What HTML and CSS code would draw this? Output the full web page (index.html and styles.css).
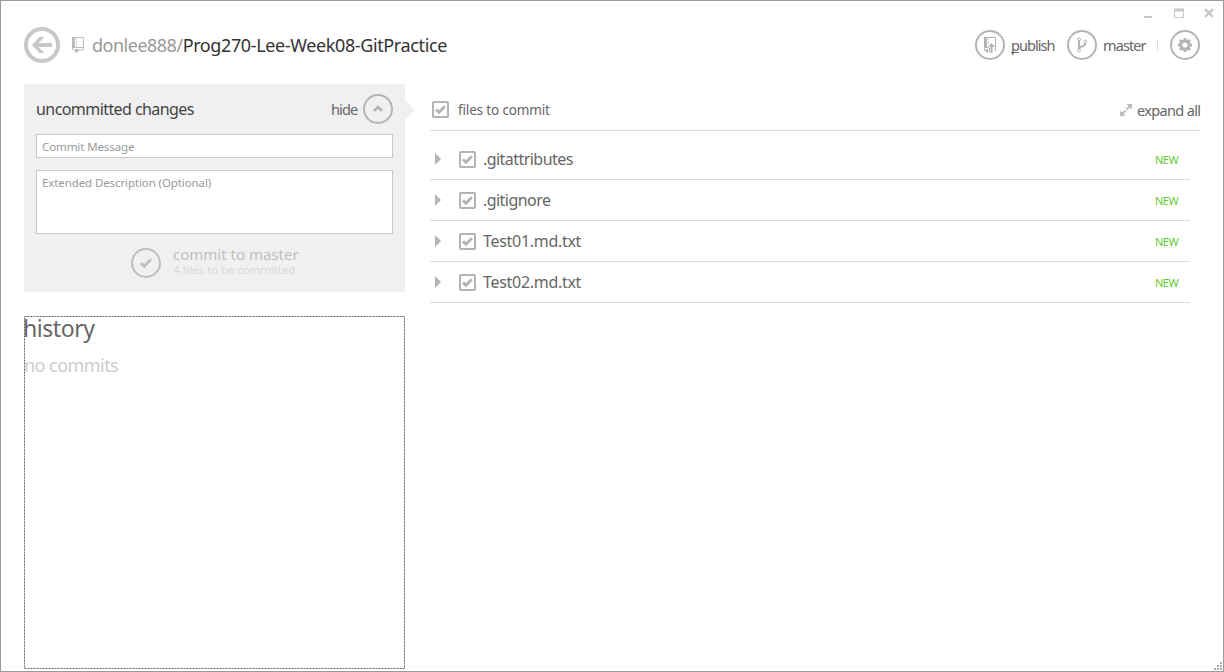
FILE: index.html
```html
<!DOCTYPE html>
<html lang="en">
<head>
<meta charset="utf-8">
<title>Prog270-Lee-Week08-GitPractice</title>
<link rel="stylesheet" href="styles.css">
</head>
<body>
<svg width="0" height="0" class="defs">
  <symbol id="check" viewBox="0 0 17 17"><rect x="1" y="1" width="15" height="15" rx=".8" fill="#fff" stroke="#b4b4b4" stroke-width="2"/><path d="M4 8.400 7 11.200 12.800 5.200" fill="none" stroke="#b4b4b4" stroke-width="2.900"/></symbol>
  <symbol id="ring" viewBox="0 0 30 30"><circle cx="15" cy="15" r="14" fill="none" stroke="#b4b4b4" stroke-width="2"/></symbol>
</svg>
<div class="window">
  <div class="controls">
    <svg width="72" height="12" viewBox="0 0 72 12"><path d="M1 9h8" stroke="#c8c8c8" stroke-width="2"/><path d="M31.5 1.5h9v8h-9z" fill="none" stroke="#c8c8c8"/><path d="M31 2h10" stroke="#c8c8c8" stroke-width="3"/><path d="M62 1l8 8M70 1l-8 8" stroke="#c8c8c8" stroke-width="2.400"/></svg>
  </div>
  <header class="header">
    <svg class="back" width="36" height="36" viewBox="0 0 36 36"><circle cx="18" cy="18" r="16" fill="none" stroke="#c8c8c8" stroke-width="4"/><path d="M8 18 15.500 10H20.500L14.500 16H28V20H14.500L20.500 26H15.500Z" fill="#c8c8c8"/></svg>
    <svg class="repo" width="12" height="16" viewBox="0 0 12 16"><path d="M1 .5h10.500v12.500H6M3 13H1.500L.5 12V.5M.5 10.500h11" fill="none" stroke="#bcbcbc"/><path d="M0 0h3v11H0z" fill="#bcbcbc"/><path d="M4.500 2v7" stroke="#bcbcbc" stroke-dasharray="1 1"/><path d="M3 12h3v4l-1.500-1.500L3 16z" fill="#bcbcbc"/></svg>
    <h1 class="title"><span class="owner">donlee888/</span><span class="name">Prog270-Lee-Week08-GitPractice</span></h1>
    <div class="actions">
      <svg width="30" height="30" viewBox="0 0 30 30"><use href="#ring"/><path d="M9.500 7.500h11v13h-1M9.500 17.500h4M9.500 7.500v13h2" fill="none" stroke="#b4b4b4"/><path d="M9 7h3v10H9z" fill="#b4b4b4"/><path d="M13.500 9v5" stroke="#b4b4b4" stroke-dasharray="1 1"/><path d="M11 19h2v4l-1-1-1 1z" fill="#b4b4b4"/><path d="M14.500 18v4.500" stroke="#b4b4b4"/><path d="M15.500 16h2v7h-2z" fill="#b4b4b4"/><path d="M13 17l3.500-4 3.500 4z" fill="#b4b4b4"/></svg>
      <span class="label publish"><u>p</u>ublish</span>
      <svg width="30" height="30" viewBox="0 0 30 30"><use href="#ring"/><g fill="#fff" stroke="#b4b4b4"><path d="M12 10v10M18 13v2l-6 3" fill="none" stroke-width="2"/><circle cx="12" cy="9.500" r="1.500"/><circle cx="12" cy="20.500" r="1.500"/><circle cx="18.200" cy="11.500" r="1.500"/></g></svg>
      <span class="label master">master</span>
      <span class="divider"></span>
      <svg width="30" height="30" viewBox="0 0 30 30"><use href="#ring"/><g stroke="#b4b4b4" fill="none"><circle cx="15" cy="15" r="4.100" stroke-width="3"/><path d="M15 8v3M15 19v3M8 15h3M19 15h3M10.050 10.050l2.100 2.100M17.850 17.850l2.100 2.100M10.050 19.950l2.100-2.100M17.850 12.150l2.100-2.100" stroke-width="2.800"/></g></svg>
    </div>
  </header>
  <main class="main">
    <aside class="side">
      <section class="commit">
        <div class="commit-head">
          <h2 class="heading">uncommitted changes</h2>
          <span class="hide">hide</span>
          <svg width="30" height="30" viewBox="0 0 30 30"><use href="#ring"/><path d="M11 17l4-4 4 4" fill="none" stroke="#b4b4b4" stroke-width="2.600"/></svg>
        </div>
        <div class="field message"><span>Commit Message</span></div>
        <div class="field description"><span>Extended Description (Optional)</span></div>
        <div class="submit">
          <svg width="30" height="30" viewBox="0 0 30 30"><circle cx="15" cy="15" r="14" fill="none" stroke="#bebebe" stroke-width="2"/><path d="M10 15l3.300 3.300 6.700-7" fill="none" stroke="#bebebe" stroke-width="2.800"/></svg>
          <div class="submit-text"><span class="submit-main">commit to master</span><span class="submit-sub">4 files to be committed</span></div>
        </div>
        <svg class="pointer" width="10" height="20" viewBox="0 0 10 20"><path d="M0 0l10 10L0 20z" fill="#f0f0f0"/></svg>
      </section>
      <section class="history">
        <svg class="focus" width="381" height="353"><rect x=".5" y=".5" width="380" height="352" fill="none" stroke="#666" stroke-dasharray="2 1"/></svg>
        <h2 class="history-title"><span>history</span></h2>
        <p class="empty"><span>no commits</span></p>
      </section>
    </aside>
    <section class="files">
      <div class="files-head">
        <svg width="17" height="17"><use href="#check"/></svg>
        <span class="files-title">files to commit</span>
        <svg class="expand-icon" width="12" height="12" viewBox="0 0 12 12"><path d="M6.500 0H12v5.500zM0 6.500V12h5.500z" fill="#bcbcbc"/><path d="M10 2 6.500 5.500M2 10l3.500-3.500" stroke="#bcbcbc" stroke-width="2"/></svg>
        <span class="expand">expand all</span>
      </div>
      <ul class="list">
        <li class="row"><svg class="tri" width="6" height="12"><path d="M0 0l6 6-6 6z"/></svg><svg width="17" height="17"><use href="#check"/></svg><span class="file">.gitattributes</span><span class="new">NEW</span></li>
        <li class="row"><svg class="tri" width="6" height="12"><path d="M0 0l6 6-6 6z"/></svg><svg width="17" height="17"><use href="#check"/></svg><span class="file">.gitignore</span><span class="new">NEW</span></li>
        <li class="row"><svg class="tri" width="6" height="12"><path d="M0 0l6 6-6 6z"/></svg><svg width="17" height="17"><use href="#check"/></svg><span class="file wide">Test01.md.txt</span><span class="new">NEW</span></li>
        <li class="row"><svg class="tri" width="6" height="12"><path d="M0 0l6 6-6 6z"/></svg><svg width="17" height="17"><use href="#check"/></svg><span class="file wide">Test02.md.txt</span><span class="new">NEW</span></li>
      </ul>
    </section>
  </main>
  <svg class="grip" width="9" height="9" viewBox="0 0 9 9"><path d="M6 0h2v2H6zM3 3h2v2H3zM6 3h2v2H6zM0 6h2v2H0zM3 6h2v2H3zM6 6h2v2H6z" fill="#aaa"/></svg>
</div>
</body>
</html>
```
FILE: styles.css
```css
* { box-sizing: border-box; }
body { margin: 0; font-family: "Noto Sans", "Open Sans", sans-serif; color: #666; background: #fff; }
svg { display: block; flex: none; }
h1, h2, p, ul { margin: 0; padding: 0; font-weight: 400; }
span { white-space: nowrap; }
.defs { position: absolute; }
.window { position: relative; width: 1224px; height: 672px; border: 1px solid #999; overflow: hidden; }
.controls { display: flex; justify-content: flex-end; height: 26px; padding: 7px 8px 0 0; }
.header { display: flex; align-items: center; height: 36px; padding: 0 23px; }
.repo { margin: 0 8px 0 12px; }
.title { font-size: 18px; line-height: 24px; letter-spacing: -0.5px; }
.owner { color: #999; }
.name { color: #333; letter-spacing: -0.38px; }
.actions { display: flex; align-items: center; margin-left: auto; }
.label { font-size: 14.5px; line-height: 20px; letter-spacing: -0.9px; }
.publish { width: 44px; margin: 0 12px 0 6px; letter-spacing: -0.95px; }
.publish u { text-decoration-thickness: 1px; text-underline-offset: 1px; text-decoration-skip-ink: none; }
.master { width: 42px; margin: 0 12px 0 6px; }
.divider { width: 1px; height: 18px; margin-right: 12px; background: linear-gradient(#fff, #d0d0d0, #fff); }
.main { display: grid; grid-template-columns: 381px 770px; gap: 25px; padding: 21px 23px 0; }
.commit { position: relative; height: 208px; padding: 10px 12px; background: #f0f0f0; }
.pointer { position: absolute; left: 381px; top: 16px; }
.commit-head { display: flex; align-items: center; height: 30px; }
.heading { font-size: 16px; line-height: 22px; letter-spacing: -0.57px; color: #444; }
.hide { width: 26px; margin: 0 6px 0 auto; font-size: 14.5px; line-height: 20px; letter-spacing: -0.9px; }
.field { border: 1px solid #c8c8c8; background: #fff; color: #999; font-size: 11.5px; line-height: 16px; padding: 4px 5px; letter-spacing: -0.1px; }
.message { height: 24px; margin-top: 10px; }
.description { height: 64px; margin-top: 12px; }
.submit { display: flex; gap: 12px; margin: 14px 0 0 95px; }
.submit-text { display: flex; flex-direction: column; margin-top: -2px; }
.submit-main { font-size: 15px; line-height: 16px; color: #c0c0c0; }
.submit-sub { font-size: 11.5px; line-height: 16px; letter-spacing: -0.07px; color: #d8d8d8; }
.history { position: relative; height: 353px; margin-top: 24px; }
.focus { position: absolute; left: 0; top: 0; }
.history-title { margin-left: -1px; font-size: 23px; line-height: 24px; letter-spacing: -0.45px; color: #666; }
.empty { font-size: 18px; line-height: 24px; margin-top: 13px; letter-spacing: -0.55px; color: #ccc; }
.files-head { display: flex; align-items: center; height: 47px; padding: 5px 0 0 2px; border-bottom: 1px solid #dcdcdc; }
.files-title { margin-left: 9px; padding-top: 1px; font-size: 13.5px; line-height: 18px; letter-spacing: -0.15px; }
.expand-icon { margin: 0 5px 0 auto; }
.expand { width: 63px; font-size: 14.5px; line-height: 20px; letter-spacing: -0.65px; }
.list { list-style: none; width: 760px; padding-top: 8px; }
.row { display: flex; align-items: center; height: 41px; padding: 0 11px 0 5px; border-bottom: 1px solid #dcdcdc; }
.tri { margin-right: 18px; fill: #b4b4b4; }
.file { margin-left: 7px; font-size: 16px; line-height: 22px; letter-spacing: -0.55px; }
.wide { letter-spacing: -0.3px; }
.new { margin-left: auto; width: 24px; padding-top: 2px; font-size: 11px; line-height: 14px; letter-spacing: -0.5px; color: #62cb31; }
.grip { position: absolute; right: 0; bottom: 0; }
```
